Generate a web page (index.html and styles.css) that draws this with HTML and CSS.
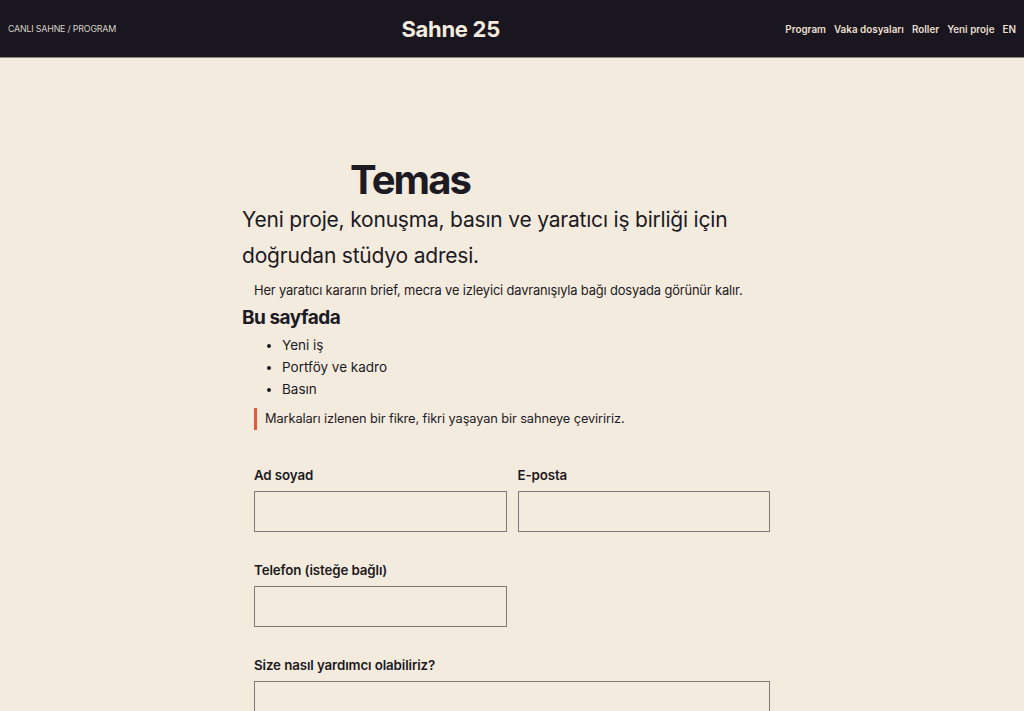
FILE: index.html
```html
<!DOCTYPE html>
<html lang="tr">
<head>
<meta charset="utf-8">
<title>Temas — Sahne 25</title>
<link rel="stylesheet" href="styles.css">
</head>
<body>
<header class="topbar">
  <div class="crumb">CANLI SAHNE / PROGRAM</div>
  <div class="brand">Sahne 25</div>
  <nav class="nav">
    <a href="#">Program</a>
    <a href="#">Vaka dosyaları</a>
    <a href="#">Roller</a>
    <a href="#">Yeni proje</a>
    <a href="#">EN</a>
  </nav>
</header>
<main class="page">
  <h1 class="title">Temas</h1>
  <p class="lead">Yeni proje, konuşma, basın ve yaratıcı iş birliği için doğrudan stüdyo adresi.</p>
  <p class="note">Her yaratıcı kararın brief, mecra ve izleyici davranışıyla bağı dosyada görünür kalır.</p>
  <h2 class="subtitle">Bu sayfada</h2>
  <ul class="toc">
    <li>Yeni iş</li>
    <li>Portföy ve kadro</li>
    <li>Basın</li>
  </ul>
  <blockquote class="quote">Markaları izlenen bir fikre, fikri yaşayan bir sahneye çeviririz.</blockquote>
  <form class="form">
    <div class="field">
      <label class="label" for="ad">Ad soyad</label>
      <input class="input" id="ad" type="text">
    </div>
    <div class="field">
      <label class="label" for="mail">E-posta</label>
      <input class="input" id="mail" type="email">
    </div>
    <div class="field">
      <label class="label" for="tel">Telefon (isteğe bağlı)</label>
      <input class="input" id="tel" type="tel">
    </div>
    <div class="field full">
      <label class="label" for="msg">Size nasıl yardımcı olabiliriz?</label>
      <textarea class="input area" id="msg"></textarea>
    </div>
  </form>
</main>
</body>
</html>
```

FILE: styles.css
```css
* { box-sizing: border-box; }
html, body { margin: 0; padding: 0; }
body {
  background: #f4ebdf;
  color: #1c1a22;
  font-family: Inter, "Noto Sans", sans-serif;
}
.topbar {
  height: 58px;
  background: #19161f;
  border-bottom: 1px solid #8d8780;
  display: flex;
  justify-content: space-between;
  align-items: center;
  padding: 0 8px;
}
.crumb {
  color: #d9d2c8;
  font-size: 8.9px;
  letter-spacing: -0.2px;
}
.brand {
  color: #f4ebdf;
  font-size: 22px;
  font-weight: 700;
  letter-spacing: -0.3px;
}
.nav {
  display: flex;
  gap: 8px;
}
.nav a {
  color: #eadfce;
  font-size: 9.9px;
  font-weight: 600;
  text-decoration: none;
}
.page {
  width: 528px;
  padding-top: 99px;
  margin-left: 242px;
}
.title {
  margin: 0;
  padding-left: 108px;
  font-size: 40px;
  font-weight: 700;
  letter-spacing: -1.9px;
  line-height: 46px;
}
.lead {
  margin: -1px 0 0;
  font-size: 21px;
  line-height: 36px;
  font-weight: 400;
  letter-spacing: -0.2px;
}
.note {
  margin: 7px 0 0;
  padding-left: 12px;
  font-size: 12.9px;
  line-height: 20px;
  letter-spacing: -0.15px;
}
.subtitle {
  margin: 4px 0 0;
  font-size: 19px;
  line-height: 26px;
  font-weight: 700;
  letter-spacing: -0.5px;
}
.toc {
  margin: 3px 0 0;
  padding-left: 40px;
  font-size: 13.5px;
  line-height: 22px;
}
.quote {
  margin: 8px 0 0 12px;
  border-left: 3px solid #f0553a;
  padding: 1px 0 1px 8px;
  font-size: 12.8px;
  line-height: 20px;
  letter-spacing: -0.1px;
}
.form {
  margin: 36px 0 0 12px;
  display: grid;
  grid-template-columns: repeat(2, minmax(0, 1fr));
  column-gap: 11px;
  row-gap: 29px;
}
.field {
  display: flex;
  flex-direction: column;
  gap: 7px;
  min-width: 0;
}
.full { grid-column: 1 / -1; }
.label {
  font-size: 13.3px;
  font-weight: 600;
  line-height: 18px;
  letter-spacing: -0.1px;
}
.input {
  width: 100%;
  min-width: 0;
  height: 41px;
  background: transparent;
  border: 1px solid #7f7a76;
  border-radius: 0;
  font: inherit;
}
.area { height: 120px; resize: none; }
```
